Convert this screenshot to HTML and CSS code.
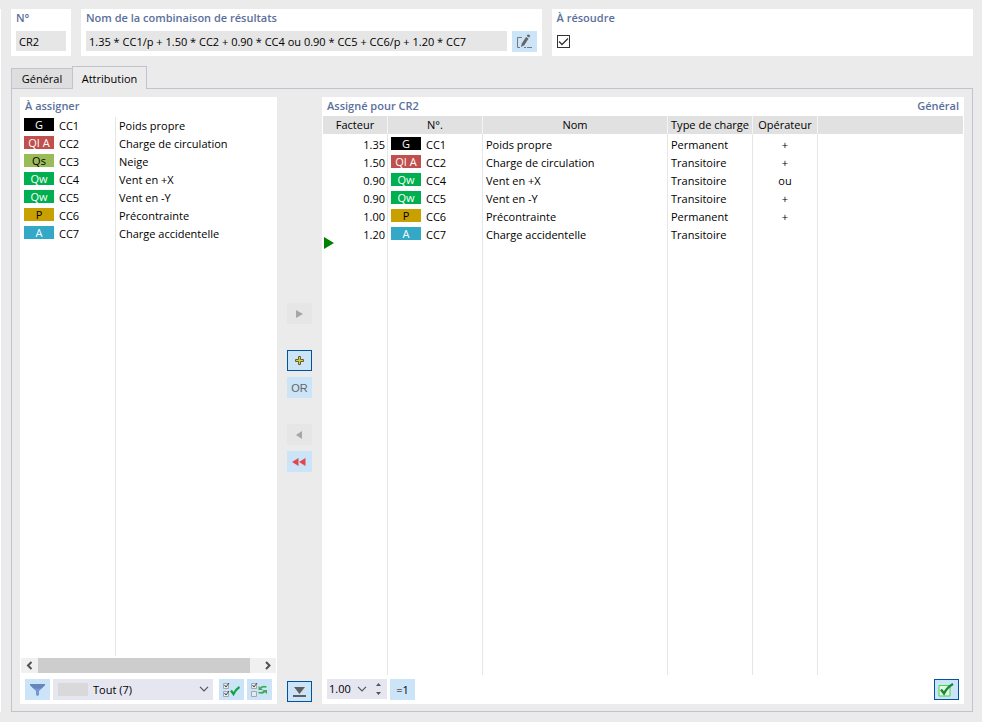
FILE: index.html
```html
<!DOCTYPE html>
<html lang="fr">
<head>
<meta charset="UTF-8">
<meta name="viewport" content="width=device-width, initial-scale=1.0">
<title>Combinaisons de résultats</title>
<link rel="stylesheet" href="styles.css">
</head>
<body>
<div class="side-edge"></div>
<main class="dialog">

  <!-- EN-TÊTE -->
  <div class="top">
    <section class="card card-no">
      <label class="title" for="no">N°</label>
      <input class="field" id="no" type="text" value="CR2" readonly>
    </section>
    <section class="card card-name">
      <label class="title" for="name">Nom de la combinaison de résultats</label>
      <div class="field-row">
        <input class="field" id="name" type="text" value="1.35 * CC1/p + 1.50 * CC2 + 0.90 * CC4 ou 0.90 * CC5 + CC6/p + 1.20 * CC7" readonly>
        <button class="btn" type="button" aria-label="Modifier le nom">
          <svg width="17" height="15" viewBox="0 0 17 15"><path d="M6 3.500H1.500v10H4M8 13.500h2M11 13.500h5" fill="none" stroke="#777"/><path d="M5 13l.8-3.500L10 3l2.600 1.600-4.300 6.600z" fill="#666"/><path d="M10.600 2L12 .3l2.300 1.500-1.100 1.800z" fill="#666"/></svg>
        </button>
      </div>
    </section>
    <section class="card card-solve">
      <label class="title" for="solve">À résoudre</label>
      <div class="check">
        <input id="solve" type="checkbox" checked>
        <svg width="13" height="13" viewBox="0 0 13 13"><path d="M2 6.500l3 3L11 3.500" fill="none" stroke="#333" stroke-width="1.300"/></svg>
      </div>
    </section>
  </div>

  <!-- ONGLETS -->
  <div class="tabs" role="tablist">
    <button class="tab" type="button" role="tab" aria-selected="false">Général</button>
    <button class="tab active" type="button" role="tab" aria-selected="true">Attribution</button>
  </div>

  <div class="panel">

    <!-- À assigner -->
    <section class="box box-left">
      <h2 class="title">À assigner</h2>
      <div class="list">
        <table class="cases">
          <tr><td><span class="tag g">G</span>CC1</td><td>Poids propre</td></tr>
          <tr><td><span class="tag ql">QI A</span>CC2</td><td>Charge de circulation</td></tr>
          <tr><td><span class="tag qs">Qs</span>CC3</td><td>Neige</td></tr>
          <tr><td><span class="tag qw">Qw</span>CC4</td><td>Vent en +X</td></tr>
          <tr><td><span class="tag qw">Qw</span>CC5</td><td>Vent en -Y</td></tr>
          <tr><td><span class="tag p">P</span>CC6</td><td>Précontrainte</td></tr>
          <tr><td><span class="tag a">A</span>CC7</td><td>Charge accidentelle</td></tr>
          <tr class="rest"><td></td><td></td></tr>
        </table>
      </div>
      <div class="scrollbar">
        <button type="button" aria-label="Défiler à gauche"><svg width="17" height="15" viewBox="0 0 17 15"><path d="M10.500 4L7 7.500l3.500 3.500" fill="none" stroke="#505050" stroke-width="2"/></svg></button>
        <div class="track"><div class="thumb"></div></div>
        <button type="button" aria-label="Défiler à droite"><svg width="17" height="15" viewBox="0 0 17 15"><path d="M7 4l3.500 3.500L7 11" fill="none" stroke="#505050" stroke-width="2"/></svg></button>
      </div>
      <div class="tools">
        <button class="btn" type="button" aria-label="Filtrer"><svg width="15" height="13" viewBox="0 0 15 13"><path d="M0 1h15v1L9 8v4l-1.500 1L6 12V8L0 2z" fill="#7795d4"/><path d="M0 1h15v1l-3.500 3.500h-8L0 2z" fill="#6685b8"/></svg></button>
        <div class="combo">
          <span class="swatch"></span>
          <select aria-label="Catégorie"><option>Tout (7)</option></select>
          <svg class="chevron" width="10" height="6" viewBox="0 0 10 6"><path d="M1 .8l4 4 4-4" fill="none" stroke="#555" stroke-width="1.200"/></svg>
        </div>
        <button class="btn" type="button" aria-label="Tout sélectionner"><svg width="17" height="15" viewBox="0 0 17 15"><path d="M.5 1.500h5v5h-5zM.5 9.500h5v5h-5z" fill="#e4eaf0" stroke="#a5a9ad"/><path d="M1.500 3l1.500 2 3-4M1.500 11l1.500 2 3-4" fill="none" stroke="#444"/><path d="M8 8.500l2.500 3.500c1.500-3 3-5 6-7" fill="none" stroke="#12a345" stroke-width="2.200"/></svg></button>
        <button class="btn" type="button" aria-label="Inverser la sélection"><svg width="17" height="15" viewBox="0 0 17 15"><path d="M.5 1.500h5v5h-5zM.5 9.500h5v5h-5z" fill="#e4eaf0" stroke="#a5a9ad"/><path d="M1.500 3l1.500 2 3-4" fill="none" stroke="#444"/><path d="M15.500 5c-2.500-.8-4.500-.5-6 1M7.500 10.500c2.500.8 4.500.5 6-1" fill="none" stroke="#3fa957" stroke-width="1.800"/><path d="M7.500 4v4h4.500zM16 12V8h-4.500z" fill="#3fa957"/></svg></button>
      </div>
    </section>

    <!-- Boutons de transfert -->
    <div class="transfer">
      <button class="btn off" type="button" disabled aria-label="Ajouter"><svg width="7" height="8" viewBox="0 0 7 8"><path d="M0 0l7 4-7 4z" fill="#a6a6a6"/></svg></button>
      <button class="btn framed group" type="button" aria-label="Ajouter avec +"><svg width="9" height="9" viewBox="0 0 9 9"><path d="M3.500.5h2v3h3v2h-3v3h-2v-3h-3v-2h3z" fill="#dcc84a" stroke="#66622a"/></svg></button>
      <button class="btn or" type="button">OR</button>
      <button class="btn off group" type="button" disabled aria-label="Retirer"><svg width="10" height="8" viewBox="0 0 10 8"><path d="M7 0L1 4l6 4z" fill="#a6a6a6"/></svg></button>
      <button class="btn" type="button" aria-label="Tout retirer"><svg width="15" height="8" viewBox="0 0 15 8"><path d="M6.500 0v8L0 4zM13.500 0v8L7 4z" fill="#e0484e"/></svg></button>
      <button class="btn framed last" type="button" aria-label="Afficher les détails"><svg width="13" height="10" viewBox="0 0 13 10"><path d="M1 0h11L6.500 7zM0 8h13v2H0z" fill="#5f5f5f"/></svg></button>
    </div>

    <!-- Assigné -->
    <section class="box box-right">
      <div class="heading">
        <h2 class="title">Assigné pour CR2</h2>
        <span class="title">Général</span>
      </div>
      <div class="list">
        <table class="assigned">
          <colgroup><col class="c-factor"><col class="c-no"><col class="c-name"><col class="c-type"><col class="c-op"><col></colgroup>
          <thead>
            <tr><th>Facteur</th><th>N°.</th><th>Nom</th><th>Type de charge</th><th>Opérateur</th><th></th></tr>
          </thead>
          <tbody>
            <tr><td>1.35</td><td><span class="tag g">G</span>CC1</td><td>Poids propre</td><td>Permanent</td><td>+</td><td></td></tr>
            <tr><td>1.50</td><td><span class="tag ql">QI A</span>CC2</td><td>Charge de circulation</td><td>Transitoire</td><td>+</td><td></td></tr>
            <tr><td>0.90</td><td><span class="tag qw">Qw</span>CC4</td><td>Vent en +X</td><td>Transitoire</td><td>ou</td><td></td></tr>
            <tr><td>0.90</td><td><span class="tag qw">Qw</span>CC5</td><td>Vent en -Y</td><td>Transitoire</td><td>+</td><td></td></tr>
            <tr><td>1.00</td><td><span class="tag p">P</span>CC6</td><td>Précontrainte</td><td>Permanent</td><td>+</td><td></td></tr>
            <tr><td class="current">1.20</td><td><span class="tag a">A</span>CC7</td><td>Charge accidentelle</td><td>Transitoire</td><td></td><td></td></tr>
            <tr class="rest"><td></td><td></td><td></td><td></td><td></td><td></td></tr>
          </tbody>
        </table>
      </div>
      <div class="tools">
        <div class="spin">
          <input type="text" value="1.00" aria-label="Facteur">
          <svg width="10" height="6" viewBox="0 0 10 6"><path d="M1 .8l4 4 4-4" fill="none" stroke="#555" stroke-width="1.200"/></svg>
          <svg width="5" height="12" viewBox="0 0 5 12"><path d="M0 3l2.500-3L5 3zM0 9h5l-2.500 3z" fill="#555"/></svg>
        </div>
        <button class="btn" type="button">=1</button>
        <button class="btn framed apply" type="button" aria-label="Appliquer"><svg width="17" height="14" viewBox="0 0 17 14"><path d="M1 2.500h11v10.500H1z" fill="#e6f7e6" stroke="#43d843"/><path d="M3 6.500L6 10.500c2-4 4.500-7 9-9.500" fill="none" stroke="#168a3c" stroke-width="2.400"/></svg></button>
      </div>
    </section>

  </div>
</main>
</body>
</html>
```
FILE: styles.css
```css
:root {
  --bg: #ebebeb;
  --field: #e6e6e6;
  --head: #e1e1e1;
  --line: #c3c3cf;
  --rule: #e6e6e6;
  --btn: #cce4f7;
  --frame: #00549f;
  --combo: #e6e6f1;
  --title: #5b6f9c;
}

* { margin: 0; padding: 0; box-sizing: border-box; }

body {
  display: flex;
  height: 100vh;
  min-height: 560px;
  background: var(--bg);
  color: #000;
  font-family: "Open Sans", "Noto Sans", sans-serif;
  font-size: 11px;
  line-height: 18px;
}
button, input, select { font: inherit; color: inherit; border: 0; border-radius: 0; }
svg { display: block; }

.side-edge { width: 1px; margin: 9px 0 10px; background: #fff; }
.dialog {
  flex: 1;
  display: flex;
  flex-direction: column;
  padding: 9px 9px 10px 10px;
}

.title {
  display: block;
  font-size: 11px;
  font-weight: 600;
  line-height: 18px;
  color: var(--title);
}

/* === EN-TÊTE === */
.top { display: flex; gap: 10px; }
.card { height: 47px; padding: 0 5px; background: #fff; }
.card .title { margin-bottom: 4px; }
.card-no { width: 60px; }
.card-name { flex: 461; }
.card-solve { flex: 421; }
.field {
  width: 100%;
  height: 20px;
  padding: 0 3px;
  background: var(--field);
}
.field-row { display: flex; gap: 5px; }

.check { position: relative; width: 13px; margin-top: 8px; }
.check input {
  display: block;
  appearance: none;
  width: 13px;
  height: 13px;
  border: 1px solid #333;
  background: #fff;
}
.check svg { position: absolute; left: 0; top: 0; pointer-events: none; }

.btn {
  display: flex;
  flex: none;
  align-items: center;
  justify-content: center;
  width: 25px;
  height: 21px;
  background: var(--btn);
}
.btn.off { background: #e6e6e6; }
.btn.framed { border: 1px solid var(--frame); }

/* === ONGLETS === */
.tabs {
  display: flex;
  align-items: flex-end;
  height: 23px;
  margin: 10px 0 -1px;
  z-index: 1;
}
.tab {
  width: 62px;
  height: 21px;
  border: 1px solid var(--line);
  background: #dedede;
}
.tab.active {
  width: 75px;
  height: 23px;
  margin-left: -1px;
  padding-top: 2px;
  border-bottom: 0;
  background: var(--bg);
}

.panel {
  flex: 1;
  display: flex;
  min-height: 0;
  padding: 8px 8px 7px;
  border: 1px solid var(--line);
}
.box {
  display: flex;
  flex-direction: column;
  background: #fff;
}
.box .title { padding: 0 5px; }
.box-left { width: 257px; }
.box-right { flex: 1; min-width: 0; }
.heading { display: flex; justify-content: space-between; }

/* === LISTES === */
.list { flex: 1; min-height: 0; margin: 1px 1px 0; }
.box-left .list { margin-top: 2px; }
table {
  width: 100%;
  height: 100%;
  table-layout: fixed;
  border-collapse: separate;
  border-spacing: 0;
}
tr { height: 18px; }
tr.rest { height: auto; }
th { font-weight: 400; height: 18px; background: var(--head); border-right: 1px solid #f4f4f4; }
th:last-child { border-right: 0; }
td {
  height: 18px;
  padding: 0 3px;
  line-height: 18px;
  white-space: nowrap;
  border-right: 1px solid var(--rule);
}
td:last-child { border-right: 0; }
.rest td { height: auto; }
.cases td:first-child { width: 95px; }

.c-factor { width: 65px; }
.c-no { width: 95px; }
.c-name { width: 185px; }
.c-type { width: 85px; }
.c-op { width: 65px; }
.assigned td:first-child { padding-right: 2px; text-align: right; }
.assigned td:nth-child(5) { text-align: center; }
.assigned tbody tr:first-child td { height: 20px; padding-top: 2px; }
.current { position: relative; }
.current::after {
  content: "";
  position: absolute;
  left: 1px;
  bottom: -5px;
  border-left: 10px solid #008000;
  border-top: 6px solid transparent;
  border-bottom: 6px solid transparent;
}

.tag {
  display: inline-block;
  width: 30px;
  height: 13px;
  margin-right: 5px;
  line-height: 13px;
  text-align: center;
  vertical-align: 1px;
  color: #fff;
}
.tag.g { background: #000; }
.tag.ql { background: #c0504d; }
.tag.qs { background: #9bbb59; color: #000; }
.tag.qw { background: #00b050; }
.tag.p { background: #c8a000; color: #000; }
.tag.a { background: #33a8c7; }

/* === BARRE DE DÉFILEMENT === */
.scrollbar {
  display: flex;
  height: 15px;
  margin: 2px 1px 0;
  background: #f0f0f0;
}
.scrollbar button { background: none; }
.track { flex: 1; }
.thumb { width: 96%; height: 15px; background: #cdcdcd; }

/* === OUTILS === */
.tools { display: flex; gap: 3px; padding: 6px 5px 4px; }
.combo { position: relative; flex: 1; margin-right: 3px; }
.combo select {
  display: block;
  appearance: none;
  width: 100%;
  height: 21px;
  padding-left: 40px;
  background: var(--combo);
}
.swatch {
  position: absolute;
  left: 5px;
  top: 4px;
  width: 30px;
  height: 13px;
  background: #d9d9d9;
}
.chevron { position: absolute; right: 4px; top: 7px; pointer-events: none; }
.box-right .tools { padding-top: 4px; }
.spin {
  display: flex;
  align-items: center;
  gap: 9px;
  width: 60px;
  height: 20px;
  padding: 0 6px 0 2px;
  background: var(--combo);
}
.spin input { flex: 1; min-width: 0; margin-right: -5px; background: none; }
.spin svg { flex: none; }
.apply { margin-left: auto; }

/* === TRANSFERT === */
.transfer {
  display: flex;
  flex-direction: column;
  align-items: center;
  gap: 6px;
  width: 45px;
  padding: 206px 0 2px;
}
.group { margin-top: 20px; }
.or { font-family: "Liberation Sans", sans-serif; color: #666; }
.last { margin-top: auto; }
```
